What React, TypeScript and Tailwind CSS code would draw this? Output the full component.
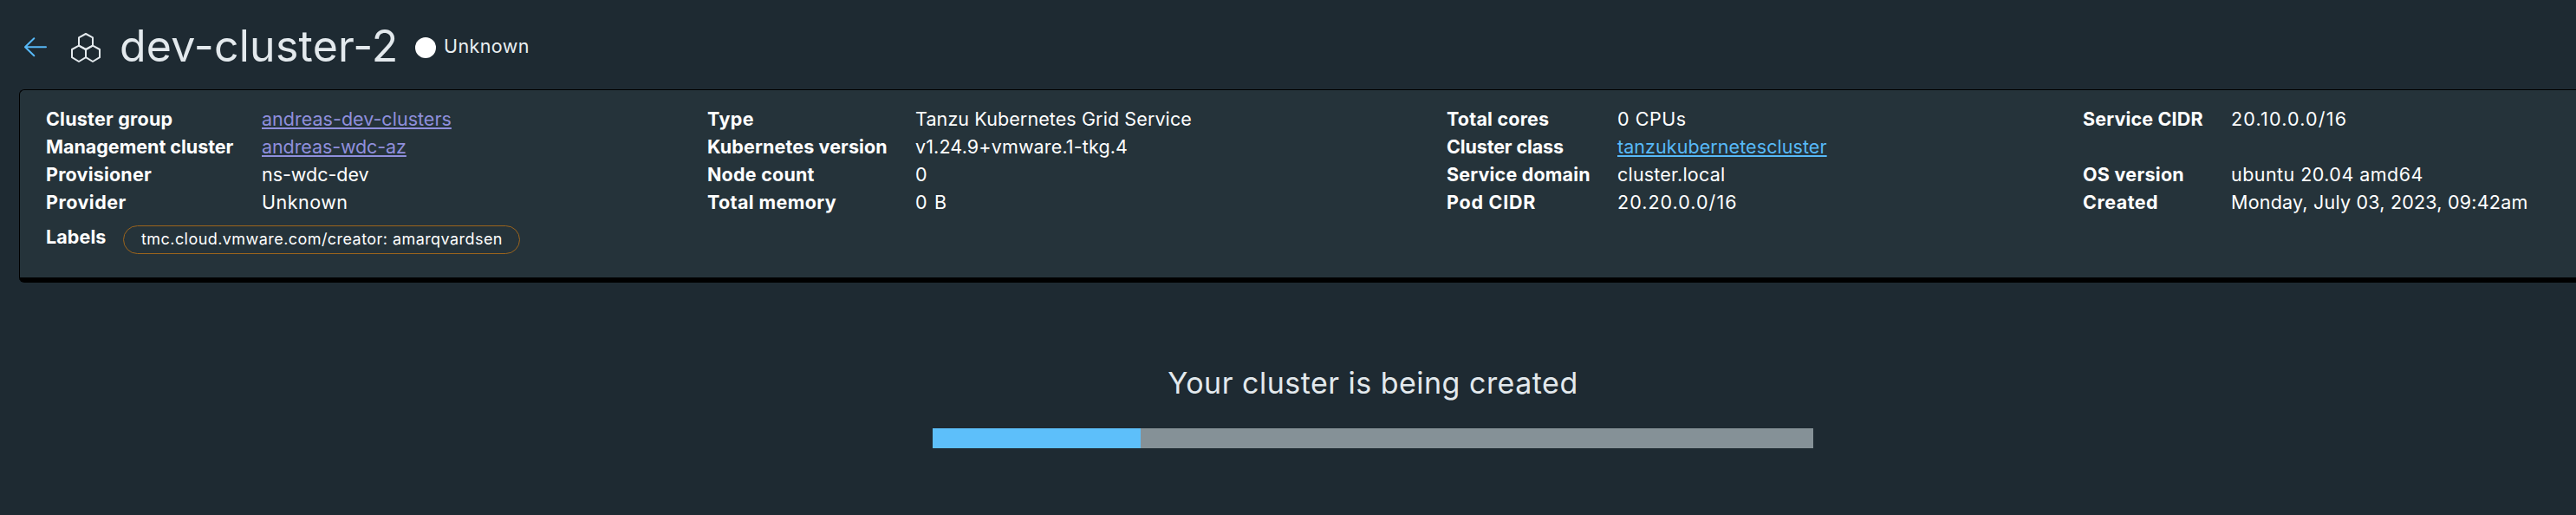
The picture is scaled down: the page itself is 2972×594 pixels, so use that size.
type Entry = {
  label: string;
  labelTracking: string;
  value: string;
  valueTracking: string;
  tone?: "visited" | "link";
};

const valueTone = {
  visited: "text-[#8f8fdc] underline decoration-2 underline-offset-2",
  link: "text-[#57b9f8] underline decoration-2 underline-offset-2",
  plain: "text-white",
};

const overview: Entry[] = [
  { label: "Cluster group", labelTracking: "tracking-[0.22px]", value: "andreas-dev-clusters", valueTracking: "tracking-[0.02px]", tone: "visited" },
  { label: "Management cluster", labelTracking: "tracking-[-0.02px]", value: "andreas-wdc-az", valueTracking: "tracking-[-0.1px]", tone: "visited" },
  { label: "Provisioner", labelTracking: "tracking-[0.2px]", value: "ns-wdc-dev", valueTracking: "tracking-[-0.03px]" },
  { label: "Provider", labelTracking: "tracking-[0.5px]", value: "Unknown", valueTracking: "tracking-[0.5px]" },
];

const runtime: Entry[] = [
  { label: "Type", labelTracking: "tracking-[0.45px]", value: "Tanzu Kubernetes Grid Service", valueTracking: "tracking-[0.1px]" },
  { label: "Kubernetes version", labelTracking: "tracking-[0.12px]", value: "v1.24.9+vmware.1-tkg.4", valueTracking: "tracking-[0.14px]" },
  { label: "Node count", labelTracking: "tracking-[0.22px]", value: "0", valueTracking: "tracking-normal" },
  { label: "Total memory", labelTracking: "tracking-[0.38px]", value: "0 B", valueTracking: "tracking-[1.2px]" },
];

const resources: Entry[] = [
  { label: "Total cores", labelTracking: "tracking-[0.2px]", value: "0 CPUs", valueTracking: "tracking-[0.53px]" },
  { label: "Cluster class", labelTracking: "tracking-[-0.13px]", value: "tanzukubernetescluster", valueTracking: "tracking-[0.07px]", tone: "link" },
  { label: "Service domain", labelTracking: "tracking-[0.18px]", value: "cluster.local", valueTracking: "tracking-[0.2px]" },
  { label: "Pod CIDR", labelTracking: "tracking-[0.75px]", value: "20.20.0.0/16", valueTracking: "tracking-[1.03px]" },
];

const system: Entry[] = [
  { label: "Service CIDR", labelTracking: "tracking-[0.16px]", value: "20.10.0.0/16", valueTracking: "tracking-[1.19px]" },
  { label: "", labelTracking: "", value: "", valueTracking: "" },
  { label: "OS version", labelTracking: "tracking-[0.28px]", value: "ubuntu 20.04 amd64", valueTracking: "tracking-[0.45px]" },
  { label: "Created", labelTracking: "tracking-[0.5px]", value: "Monday, July 03, 2023, 09:42am", valueTracking: "tracking-[0.21px]" },
];

function Details({ entries, columns }: { entries: Entry[]; columns: string }) {
  return (
    <dl className={`grid auto-rows-[32px] content-start whitespace-nowrap text-[21.5px] leading-8 ${columns}`}>
      {entries.map((e, i) => (
        <div key={i} className="contents">
          <dt className={`font-[650] ${e.labelTracking}`}>{e.label}</dt>
          <dd className={e.valueTracking}>
            <span className={valueTone[e.tone ?? "plain"]}>{e.value}</span>
          </dd>
        </div>
      ))}
    </dl>
  );
}

function BackArrow() {
  return (
    <svg className="h-6 w-7 shrink-0" viewBox="0 0 28 24" fill="none" stroke="#57b9f8" strokeWidth="2" strokeLinecap="round" strokeLinejoin="round">
      <path d="M26 12.3H2.2M12.3 2.3L2 12.3l10.3 10" />
    </svg>
  );
}

function ClusterIcon() {
  return (
    <svg className="h-9 w-9 shrink-0" viewBox="0 0 36 36" fill="none" stroke="#e3e9ed" strokeWidth="2" strokeLinejoin="round">
      <path d="M18 2L26 6.4V15.6L18 20L10 15.6V6.4Z" />
      <path d="M10 15.6L18 20V29.2L10 34L2 29.2V20Z" />
      <path d="M26 15.6L34 20V29.2L26 34L18 29.2V20Z" />
    </svg>
  );
}

export default function App() {
  return (
    <div className="flex h-[594px] w-[2972px] flex-col overflow-hidden bg-[#1e2a32] font-['Inter',sans-serif] text-white">
      <header className="flex h-[103px] shrink-0 items-start pl-[27px]">
        <div className="flex pt-[42px]">
          <BackArrow />
        </div>
        <div className="flex pt-[37px] pl-[26px]">
          <ClusterIcon />
        </div>
        <h1 className="ml-[21px] w-[341px] pt-[23px] text-[50px] leading-[60px] font-[370] tracking-[0.25px] whitespace-nowrap text-[#e3e9ed]">
          dev-cluster-2
        </h1>
        <span className="mt-[43px] size-6 rounded-full bg-white" />
        <span className="ml-[9px] pt-[37px] text-[21.5px] leading-8 tracking-[0.4px] text-[#e9eef1]">Unknown</span>
      </header>

      <section className="ml-[22px] h-[223px] shrink-0 rounded-l-md border-t border-b-[6px] border-l border-black bg-[#25333a] pt-[17px] pl-[30px]">
        <div className="flex">
          <Details entries={overview} columns="w-[763px] grid-cols-[249px_auto]" />
          <Details entries={runtime} columns="w-[853px] grid-cols-[240px_auto]" />
          <Details entries={resources} columns="w-[734px] grid-cols-[197px_auto]" />
          <Details entries={system} columns="grid-cols-[171px_auto]" />
        </div>
        <div className="flex items-start text-[21.5px] leading-8">
          <span className="w-[89px] pt-2 font-[650] tracking-[0.1px]">Labels</span>
          <span className="mt-[11px] h-[33px] w-[458px] rounded-full border border-[#9c641c] pl-5 text-[18px] leading-[29px] tracking-[0.44px] whitespace-nowrap">
            tmc.cloud.vmware.com/creator: amarqvardsen
          </span>
        </div>
      </section>

      <main className="ml-[1076px] w-[1016px] pt-[96px]">
        <h2 className="text-center text-[34px] leading-10 font-[370] tracking-[0.48px] text-[#e3e9ed]">Your cluster is being created</h2>
        <div className="mt-8 flex h-[23px] bg-[#859197]">
          <div className="w-[240px] bg-[#5dbffa]" />
        </div>
      </main>
    </div>
  );
}
